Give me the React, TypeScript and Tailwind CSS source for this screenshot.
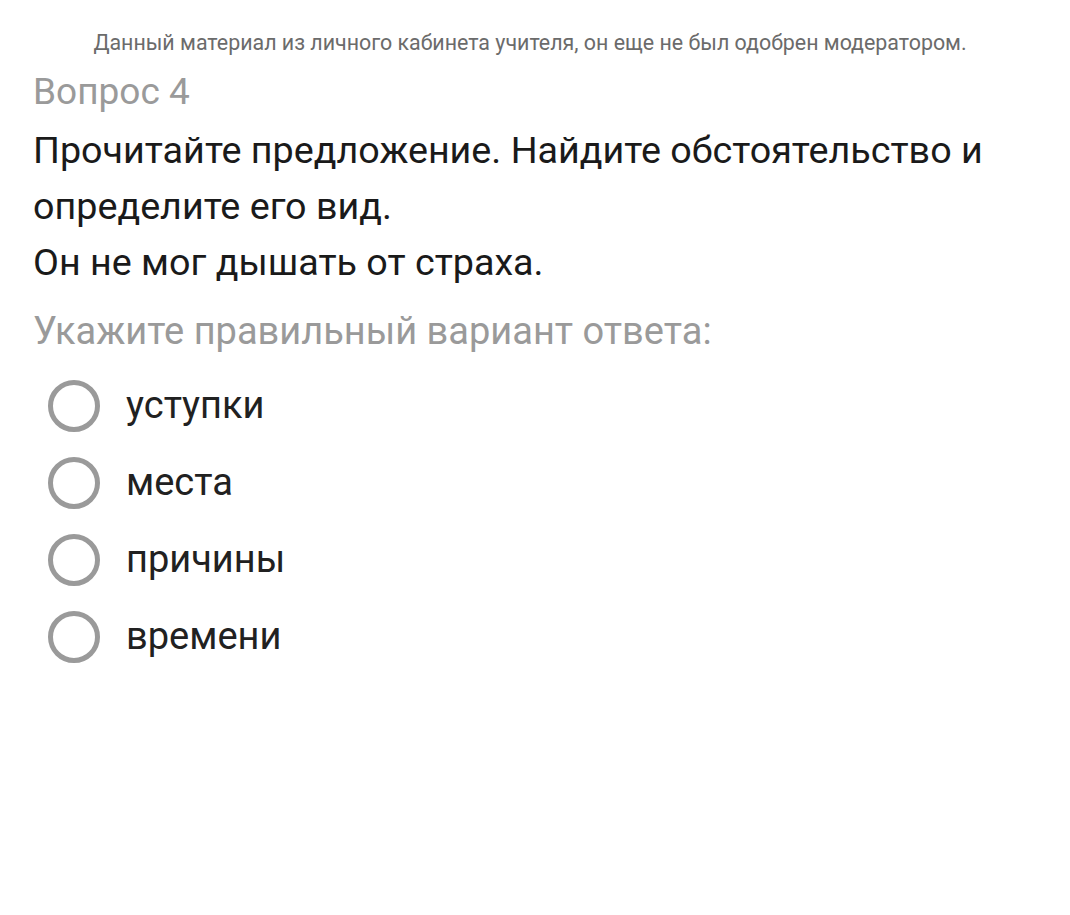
import React from 'react';

const options = ['уступки', 'места', 'причины', 'времени'];

const Radio: React.FC<{ label: string }> = ({ label }) => (
  <label className="flex items-center h-[77px]">
    <span className="w-[52px] h-[52px] rounded-full border-[5px] border-[#9a9a9a] ml-[48px] shrink-0" />
    <span className="ml-[26px] text-[38px] text-[#212121]">{label}</span>
  </label>
);

export default function App() {
  return (
    <div className="w-[1070px] h-[915px] bg-white font-['Roboto',sans-serif]">
      <p className="pt-[30px] pr-[10px] text-center text-[21.4px] leading-[26px] text-[#6b6b6b]">
        Данный материал из личного кабинета учителя, он еще не был одобрен модератором.
      </p>
      <div className="px-[33px]">
        <h2 className="mt-[12px] text-[37px] leading-[48px] text-[#9a9a9a]">Вопрос 4</h2>
        <div className="mt-[6px] text-[37.7px] leading-[56px] text-[#1a1a1a]">
          <p>Прочитайте предложение. Найдите обстоятельство и определите его вид.</p>
          <p>Он не мог дышать от страха.</p>
        </div>
        <p className="mt-[19px] text-[38px] leading-[44px] text-[#9a9a9a]">
          Укажите правильный вариант ответа:
        </p>
      </div>
      <div className="mt-[14px] flex flex-col">
        {options.map((o) => (
          <Radio key={o} label={o} />
        ))}
      </div>
    </div>
  );
}
